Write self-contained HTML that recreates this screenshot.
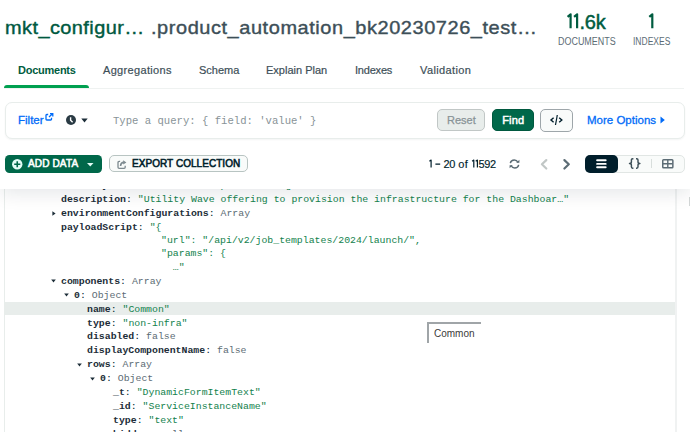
<!DOCTYPE html>
<html><head><meta charset="utf-8">
<style>
*{margin:0;padding:0;box-sizing:border-box}
html,body{width:690px;height:432px;overflow:hidden;background:#fff;font-family:"Liberation Sans",sans-serif}
.a{position:absolute;white-space:pre}
.s{font-family:"Liberation Sans",sans-serif}
svg{position:absolute;overflow:visible}
#doc{position:absolute;left:4px;top:150px;width:673px;height:300px;border-left:1px solid #E8EDEB;border-right:2px solid #F0F2F2;background:#fff}
.r{position:absolute;left:0;white-space:pre;font-family:"Liberation Mono",monospace;font-size:9.86px;line-height:14px;height:14px;color:#001E2B}
.k{font-weight:bold;color:#1C2D38}
.str{color:#12824D}
.ty{color:#5C6C75}
.tri{position:absolute;width:0;height:0}
.tr-d{border-left:2.5px solid transparent;border-right:2.5px solid transparent;border-top:3px solid #1C2D38}
.tr-r{border-top:2.5px solid transparent;border-bottom:2.5px solid transparent;border-left:3px solid #1C2D38}
</style></head>
<body>
<!-- document list -->
<div id="doc"></div>
<div class="a" style="left:5px;top:302px;width:670px;height:13px;background:#E8EDEB"></div>

<div class="r" style="top:179.26px;left:61px"><span class="k">industry</span>: <span class="str">"Self Service Template Config"</span></div>
<div class="r" style="top:193.20px;left:61px"><span class="k">description</span>: <span class="str">"Utility Wave offering to provision the infrastructure for the Dashboar…"</span></div>
<svg style="left:51.60px;top:210.94px" width="4" height="5" viewBox="0 0 4 5"><path d="M0.4 0.2V4.8L3.6 2.5Z" fill="#1C2D38"/></svg>
<div class="r" style="top:207.14px;left:61px"><span class="k">environmentConfigurations</span>: <span class="ty">Array</span></div>
<div class="r" style="top:221.08px;left:61px"><span class="k">payloadScript</span>: <span class="str">"{</span></div>
<div class="r" style="top:234.22px;left:149.2px"><span class="str">  "url": "/api/v2/job_templates/2024/launch/",</span></div>
<div class="r" style="top:247.36px;left:149.2px"><span class="str">  "params": {</span></div>
<div class="r" style="top:260.50px;left:149.2px"><span class="str">    …"</span></div>
<svg style="left:51.30px;top:279.20px" width="5" height="4" viewBox="0 0 5 4"><path d="M0.2 0.4H4.8L2.5 3.4Z" fill="#1C2D38"/></svg>
<div class="r" style="top:274.70px;left:61px"><span class="k">components</span>: <span class="ty">Array</span></div>
<svg style="left:64.30px;top:293.14px" width="5" height="4" viewBox="0 0 5 4"><path d="M0.2 0.4H4.8L2.5 3.4Z" fill="#1C2D38"/></svg>
<div class="r" style="top:288.64px;left:74px"><span class="k">0</span>: <span class="ty">Object</span></div>
<div class="r" style="top:302.58px;left:87px"><span class="k">name</span>: <span class="str">"Common"</span></div>
<div class="r" style="top:316.52px;left:87px"><span class="k">type</span>: <span class="str">"non-infra"</span></div>
<div class="r" style="top:330.46px;left:87px"><span class="k">disabled</span>: <span class="ty">false</span></div>
<div class="r" style="top:344.40px;left:87px"><span class="k">displayComponentName</span>: <span class="ty">false</span></div>
<svg style="left:77.30px;top:362.84px" width="5" height="4" viewBox="0 0 5 4"><path d="M0.2 0.4H4.8L2.5 3.4Z" fill="#1C2D38"/></svg>
<div class="r" style="top:358.34px;left:87px"><span class="k">rows</span>: <span class="ty">Array</span></div>
<svg style="left:90.30px;top:376.78px" width="5" height="4" viewBox="0 0 5 4"><path d="M0.2 0.4H4.8L2.5 3.4Z" fill="#1C2D38"/></svg>
<div class="r" style="top:372.28px;left:100px"><span class="k">0</span>: <span class="ty">Object</span></div>
<div class="r" style="top:386.22px;left:113px"><span class="k">_t</span>: <span class="str">"DynamicFormItemText"</span></div>
<div class="r" style="top:400.16px;left:113px"><span class="k">_id</span>: <span class="str">"ServiceInstanceName"</span></div>
<div class="r" style="top:414.10px;left:113px"><span class="k">type</span>: <span class="str">"text"</span></div>
<div class="r" style="top:428.04px;left:113px"><span class="k">hidden</span>: <span class="ty">null</span></div>

<!-- tooltip -->
<div class="a" style="left:427px;top:322px;width:54px;height:21px;border-left:2px solid #A0A5A8;border-top:2px solid #A0A5A8"></div>
<div class="a s" style="left:434px;top:328.3px;font-size:10px;line-height:12px;color:#3A3A3A">Common</div>
<!-- scroll thumb -->
<div class="a" style="left:689px;top:197px;width:1px;height:9px;background:#D3D7D7"></div>

<!-- header white area + shadow -->
<div class="a" style="left:0;top:0;width:690px;height:189px;background:#fff;box-shadow:0 4px 18px rgba(0,30,43,0.11)"></div>

<!-- title -->
<div class="a s" style="left:4.6px;top:16.2px;font-size:19px;line-height:24px;letter-spacing:0.4px;color:#00593F;-webkit-text-stroke:0.4px #00593F;transform:scaleX(1.05);transform-origin:0 0">mkt_configur…</div>
<div class="a s" style="left:151px;top:16.2px;font-size:19px;line-height:24px;letter-spacing:0.54px;color:#3D4F58;-webkit-text-stroke:0.4px #3D4F58;transform:scaleX(1.05);transform-origin:0 0">.product_automation_bk20230726_test…</div>
<!-- stats -->
<svg style="left:0;top:0" width="690" height="40"><path d="M567.6 16.9L570.6 14.3V28.3M574.1 16.9L577.1 14.3V28.3M649.3 16.9L652.3 14.3V28.3" fill="none" stroke="#005C40" stroke-width="2.2" stroke-linejoin="round"/></svg>
<div class="a s" style="left:579.6px;top:10.8px;font-size:20px;line-height:22px;letter-spacing:-0.3px;color:#005C40;-webkit-text-stroke:0.45px #005C40">.6k</div>
<div class="a s" style="left:557.6px;top:36.6px;font-size:10px;line-height:10px;color:#5C6C75;transform:scaleX(0.895);transform-origin:0 0">DOCUMENTS</div>
<div class="a s" style="left:633.3px;top:36.6px;font-size:10px;line-height:10px;color:#5C6C75;transform:scaleX(0.85);transform-origin:0 0">INDEXES</div>

<!-- tabs -->
<div class="a s" style="left:18px;top:64px;font-size:11px;line-height:12px;font-weight:bold;letter-spacing:-0.25px;color:#005C40">Documents</div>
<div class="a s" style="left:103px;top:64px;font-size:11px;line-height:12px;letter-spacing:0.33px;color:#3D4F58;-webkit-text-stroke:0.2px #3D4F58">Aggregations</div>
<div class="a s" style="left:199px;top:64px;font-size:11px;line-height:12px;color:#3D4F58;-webkit-text-stroke:0.2px #3D4F58">Schema</div>
<div class="a s" style="left:266px;top:64px;font-size:11px;line-height:12px;color:#3D4F58;-webkit-text-stroke:0.2px #3D4F58">Explain Plan</div>
<div class="a s" style="left:355px;top:64px;font-size:11px;line-height:12px;letter-spacing:-0.2px;color:#3D4F58;-webkit-text-stroke:0.2px #3D4F58">Indexes</div>
<div class="a s" style="left:420px;top:64px;font-size:11px;line-height:12px;letter-spacing:0.38px;color:#3D4F58;-webkit-text-stroke:0.2px #3D4F58">Validation</div>
<div class="a" style="left:4px;top:87.6px;width:680px;height:1.2px;background:#EFF2F1"></div>
<div class="a" style="left:4px;top:85px;width:85px;height:3.4px;border-radius:3px 3px 0 0;background:#00A050"></div>

<!-- filter bar -->
<div class="a" style="left:4.5px;top:101.5px;width:680.5px;height:37.5px;border:1px solid #E8EDEB;border-radius:7px;background:#fff;box-shadow:0 1px 2px rgba(0,30,43,0.05)"></div>
<div class="a s" style="left:18px;top:114px;font-size:11.5px;line-height:12px;color:#016BF8;-webkit-text-stroke:0.3px #016BF8">Filter</div>
<svg style="left:45px;top:113px" width="9" height="8" viewBox="0 0 9 8"><path d="M3.2 1.5H1.8Q1 1.5 1 2.3V6.2Q1 7 1.8 7H5.7Q6.5 7 6.5 6.2V4.8" fill="none" stroke="#016BF8" stroke-width="1.3"/><path d="M4 4L7.5 0.8M5 0.6H7.8V3.4" fill="none" stroke="#016BF8" stroke-width="1.3"/></svg>
<svg style="left:66px;top:115px" width="10" height="10" viewBox="0 0 10 10"><circle cx="5" cy="5" r="5" fill="#2A3B44"/><path d="M4.6 2.2V5.2L6.6 7.2" fill="none" stroke="#fff" stroke-width="1.4"/></svg>
<svg style="left:81px;top:118px" width="7" height="5" viewBox="0 0 7 5"><path d="M0.3 0.5H6.7L3.5 4.5Z" fill="#1C2D38"/></svg>
<div class="a" style="left:113px;top:115px;font-size:10.6px;line-height:12px;color:#889397;font-family:'Liberation Mono',monospace">Type a query: { field: 'value' }</div>
<div class="a" style="left:437px;top:109px;width:48px;height:22px;border:1px solid #C1C7C6;border-radius:5px;background:#E8EDEB"></div>
<div class="a s" style="left:447px;top:114px;font-size:11px;line-height:12px;color:#889397;-webkit-text-stroke:0.25px #889397">Reset</div>
<div class="a" style="left:492px;top:109px;width:41.5px;height:22px;border:1px solid #00593F;border-radius:5px;background:#00684A"></div>
<div class="a s" style="left:502.3px;top:114px;font-size:11px;line-height:12px;color:#fff;-webkit-text-stroke:0.5px #fff;letter-spacing:0.1px">Find</div>
<div class="a" style="left:540px;top:108.5px;width:33px;height:23px;border:1px solid #9EA6AA;border-radius:5px;background:#F9FBFA"></div>
<svg style="left:550px;top:115px" width="13" height="10" viewBox="0 0 13 10"><path d="M3.6 2.8L1 5L3.6 7.2M9.2 2.8L11.8 5L9.2 7.2" fill="none" stroke="#001E2B" stroke-width="1.4"/><path d="M7.3 0L5.5 10" fill="none" stroke="#001E2B" stroke-width="1.2"/></svg>
<div class="a s" style="left:587px;top:114px;font-size:11.5px;line-height:12px;color:#016BF8;-webkit-text-stroke:0.3px #016BF8">More Options</div>
<svg style="left:660px;top:116px" width="5" height="8" viewBox="0 0 5 8"><path d="M0.5 0.5L4.8 4L0.5 7.5Z" fill="#016BF8"/></svg>

<!-- toolbar -->
<div class="a" style="left:4.5px;top:155px;width:97.5px;height:18px;border-radius:4.5px;background:#00684A"></div>
<svg style="left:11.5px;top:158.8px" width="10.5" height="10.5" viewBox="0 0 10.5 10.5"><circle cx="5.25" cy="5.25" r="5.2" fill="#E3FCF7"/><path d="M5.25 2.2V8.3M2.2 5.25H8.3" stroke="#00684A" stroke-width="1.6"/></svg>
<div class="a s" style="left:28px;top:159.4px;font-size:10px;line-height:10px;color:#fff;-webkit-text-stroke:0.55px #fff;letter-spacing:0.15px">ADD DATA</div>
<svg style="left:86.8px;top:162.8px" width="7" height="4" viewBox="0 0 7 4"><path d="M0 0H6.5L3.25 3.6Z" fill="#E3FCF7"/></svg>
<div class="a" style="left:108.7px;top:155.2px;width:139px;height:17.2px;border:1px solid #B8C4C2;border-radius:5px;background:#F9FBFA"></div>
<svg style="left:116.5px;top:159.5px" width="10" height="9" viewBox="0 0 10 9"><path d="M3.1 1.4H2.1Q1 1.4 1 2.5V7.3Q1 8.4 2.1 8.4H7.1Q8.2 8.4 8.2 7.3V5.8" fill="none" stroke="#7D8A90" stroke-width="1.3"/><path d="M3.6 6.1Q3.7 2.6 6.8 2.4" fill="none" stroke="#7D8A90" stroke-width="1.6"/><path d="M6.2 0.3L9.4 2.4L6.2 4.5Z" fill="#7D8A90"/></svg>
<div class="a s" style="left:132px;top:159.4px;font-size:10px;line-height:10px;color:#001E2B;-webkit-text-stroke:0.55px #001E2B;letter-spacing:0.05px">EXPORT COLLECTION</div>
<svg style="left:0;top:0" width="690" height="180"><path d="M429.4 161.3L431.1 160.1V167.6M472.1 161.3L473.8 160.1V167.6M475.7 161.3L477.4 160.1V167.6" fill="none" stroke="#001E2B" stroke-width="1.2" stroke-linejoin="round"/><rect x="435.4" y="163.5" width="4.8" height="1.25" fill="#001E2B"/></svg><div class="a s" style="left:443.4px;top:158.6px;font-size:11px;line-height:11px;letter-spacing:-0.3px;color:#001E2B;-webkit-text-stroke:0.15px #001E2B">20</div><div class="a s" style="left:458.3px;top:158.6px;font-size:11px;line-height:11px;letter-spacing:0.3px;color:#001E2B;-webkit-text-stroke:0.15px #001E2B">of</div><div class="a s" style="left:478.5px;top:158.6px;font-size:11px;line-height:11px;letter-spacing:-0.35px;color:#001E2B;-webkit-text-stroke:0.15px #001E2B">592</div>
<svg style="left:508px;top:159px" width="13" height="10" viewBox="0 0 13 10"><path d="M2.3 4.2Q3 1 6.3 1Q8.8 1 10 3.5M10.7 5.8Q10 9 6.7 9Q4.2 9 3 6.5" fill="none" stroke="#5C6C75" stroke-width="1.4"/><path d="M8.2 3.8H11.4V0.8Z M4.8 6.2H1.6V9.2Z" fill="#5C6C75"/></svg>
<svg style="left:540px;top:159px" width="8" height="11" viewBox="0 0 8 11"><path d="M6.3 1.1L1.9 5.3L6.3 9.5" fill="none" stroke="#C1C7C6" stroke-width="2.2" stroke-linecap="round" stroke-linejoin="round"/></svg>
<svg style="left:563px;top:159px" width="8" height="11" viewBox="0 0 8 11"><path d="M1.4 1.1L5.8 5.3L1.4 9.5" fill="none" stroke="#5C6C75" stroke-width="2.2" stroke-linecap="round" stroke-linejoin="round"/></svg>
<div class="a" style="left:584.5px;top:155px;width:100px;height:18px;border:1px solid #E1E6E4;border-radius:5px;background:#F9FBFA"></div>
<div class="a" style="left:585px;top:155px;width:33px;height:18px;border-radius:5px;background:#001E2B"></div>
<svg style="left:595.5px;top:159px" width="11" height="10" viewBox="0 0 11 10"><path d="M1.1 1.3H9.7M1.1 4.9H9.7M1.1 8.2H9.7" stroke="#fff" stroke-width="1.9" stroke-linecap="round"/></svg>
<svg style="left:629px;top:158.3px" width="12" height="11" viewBox="0 0 12 11"><path d="M4.4 0.75H3.7Q2.4 0.75 2.4 2.1V3.9Q2.4 5.45 0.5 5.45Q2.4 5.45 2.4 7V8.8Q2.4 10.2 3.7 10.2H4.4M7.0 0.75H7.7Q9.0 0.75 9.0 2.1V3.9Q9.0 5.45 10.9 5.45Q9.0 5.45 9.0 7V8.8Q9.0 10.2 7.7 10.2H7.0" fill="none" stroke="#3D4F58" stroke-width="1.45" stroke-linejoin="round"/></svg>
<div class="a" style="left:651px;top:159px;width:1.3px;height:9px;background:#D8DEDC"></div>
<svg style="left:662.4px;top:159.1px" width="12" height="10" viewBox="0 0 12 10"><rect x="0.75" y="0.75" width="10.1" height="8.1" rx="0.8" fill="none" stroke="#5C6C75" stroke-width="1.5"/><path d="M5.8 1V9M1 4.8H10.6" stroke="#5C6C75" stroke-width="1.4"/></svg>

</body></html>
